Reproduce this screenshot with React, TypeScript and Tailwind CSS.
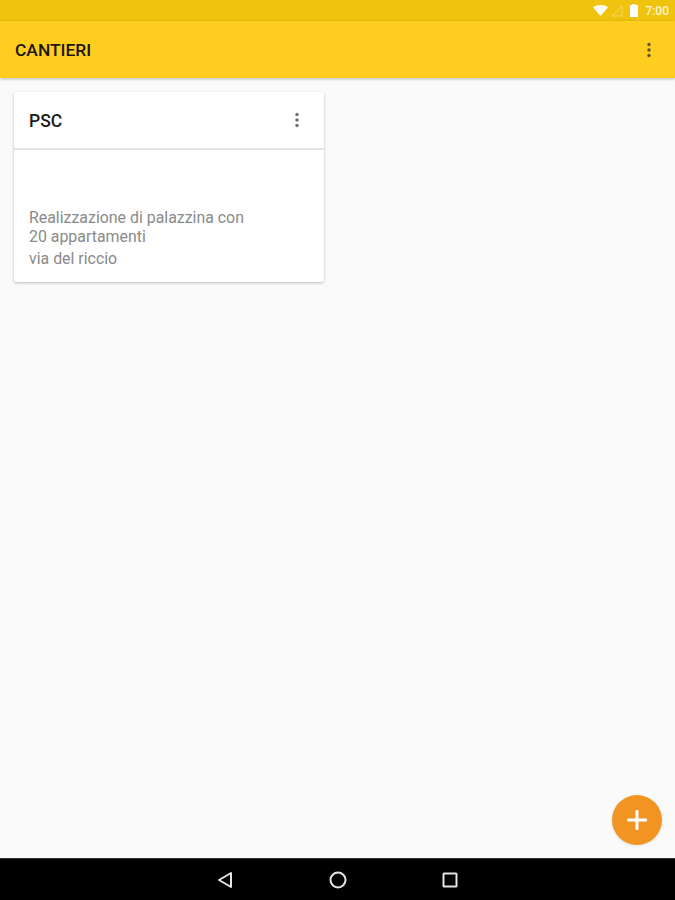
function Dots({ color }: { color: string }) {
  return (
    <svg width="4" height="16" viewBox="0 0 4 16" fill={color}>
      <circle cx="2" cy="2.5" r="1.7" />
      <circle cx="2" cy="8" r="1.7" />
      <circle cx="2" cy="13.5" r="1.7" />
    </svg>
  );
}

export default function App() {
  return (
    <div className="h-[900px] w-[675px] flex flex-col overflow-hidden bg-[#fafafa] font-['Roboto',sans-serif]">
      <div className="h-[21px] shrink-0 bg-[#f0c30f] flex items-center justify-end pr-[6px]">
        <svg width="15" height="11" viewBox="0 0 15 11" fill="#fff" className="mr-[3px]">
          <path d="M0 2.2 C4 -0.7 11 -0.7 15 2.2 L7.5 11 Z" />
        </svg>
        <svg width="12" height="12" viewBox="0 0 12 12" fill="none" stroke="#fff" strokeOpacity="0.45" strokeWidth="0.8" className="mr-[7px]">
          <path d="M11 1 V11 H1 Z" />
        </svg>
        <svg width="8" height="13" viewBox="0 0 8 13" fill="#fff" className="mr-[7px]">
          <path d="M2.5 0 H5.5 V1 H8 V13 H0 V1 H2.5 Z" />
        </svg>
        <span className="text-[12px] leading-none font-medium text-[#fff7d0]">7:00</span>
      </div>
      <div className="h-[57px] shrink-0 bg-[#ffcd20] flex items-center justify-between pl-[15px] pr-[24px] shadow-[0_1px_3px_rgba(0,0,0,0.28)] relative">
        <span className="text-[17.4px] font-medium text-[#1c1608] mt-[1px]">CANTIERI</span>
        <Dots color="#5f5320" />
      </div>
      <div className="flex-1 pt-[14px] pl-[14px]">
        <div className="w-[310px] h-[190px] bg-white rounded-[2px] shadow-[0_1px_3px_rgba(0,0,0,0.25)] flex flex-col">
          <div className="h-[58px] shrink-0 border-b-2 border-[#e3e3e3] flex items-center justify-between pl-[15px] pr-[25px]">
            <span className="text-[17.5px] font-medium text-[#1a1a1a] mt-[2px]">PSC</span>
            <Dots color="#6f6f6f" />
          </div>
          <div className="flex-1 pl-[15px] pt-[58px] text-[15.9px] text-[#8a8a8a]">
            <div className="leading-[19px]">Realizzazione di palazzina con</div>
            <div className="leading-[19px]">20 appartamenti</div>
            <div className="leading-[19px] mt-[3px]">via del riccio</div>
          </div>
        </div>
      </div>
      <div className="h-[42px] shrink-0 bg-black border-t border-[#333] flex items-center relative">
        <svg width="16" height="18" viewBox="0 0 16 18" fill="none" stroke="#e4e4e4" strokeWidth="2" strokeLinejoin="round" className="ml-[217px]">
          <path d="M14 2 V16 L2 9 Z" />
        </svg>
        <svg width="18" height="18" viewBox="0 0 18 18" fill="none" stroke="#e4e4e4" strokeWidth="2" className="ml-[96px]">
          <circle cx="9" cy="9" r="7.5" />
        </svg>
        <svg width="16" height="16" viewBox="0 0 16 16" fill="none" stroke="#e4e4e4" strokeWidth="2" className="ml-[95px]">
          <rect x="1.5" y="1.5" width="13" height="13" rx="0.5" />
        </svg>
      </div>
      <button className="absolute left-[612px] top-[795px] w-[50px] h-[50px] rounded-full bg-[#f29422] flex items-center justify-center shadow-[0_1px_3px_rgba(0,0,0,0.1)]">
        <svg width="22" height="22" viewBox="0 0 22 22" fill="#fff">
          <rect x="9.5" y="1" width="3" height="20" rx="1" />
          <rect x="1" y="9.5" width="20" height="3" rx="1" />
        </svg>
      </button>
    </div>
  );
}
